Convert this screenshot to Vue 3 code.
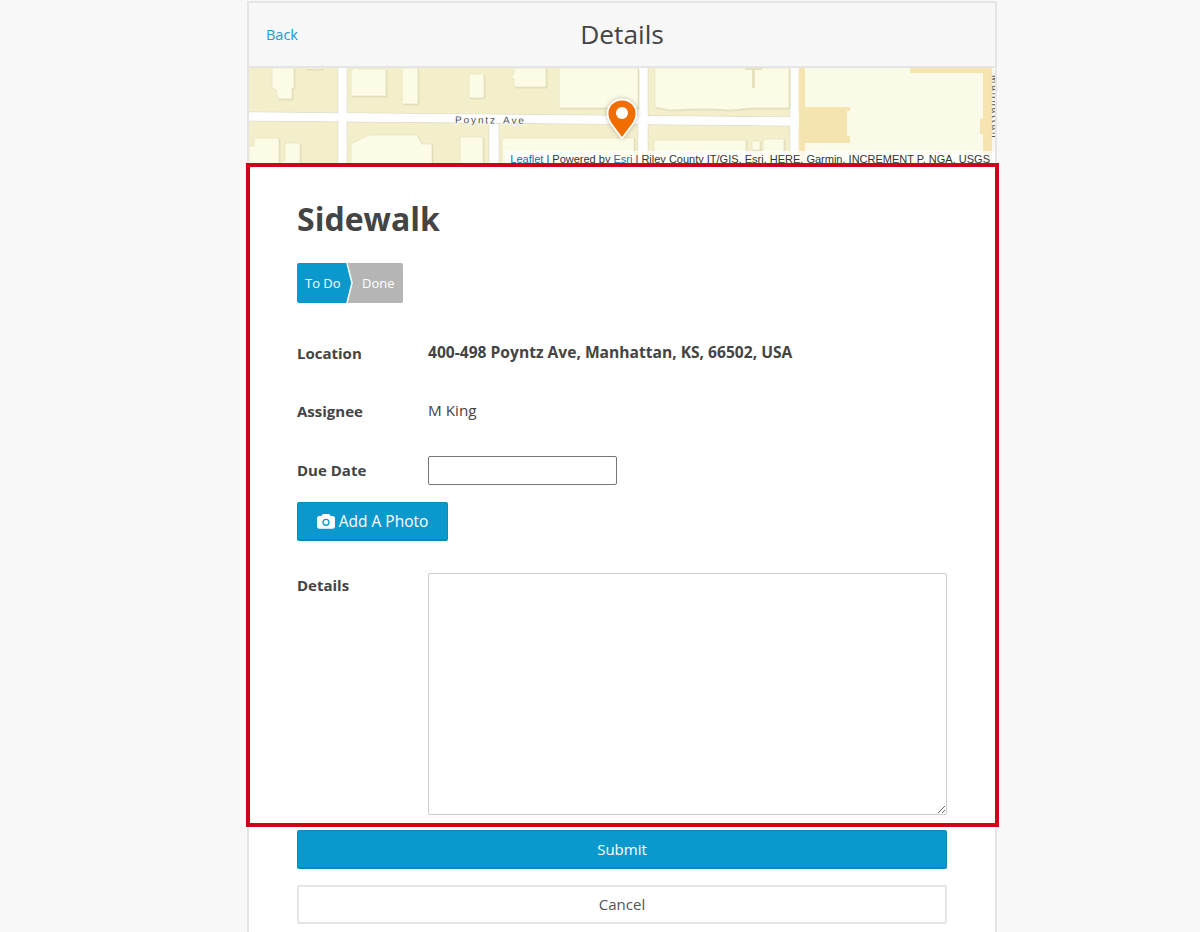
<template>
  <div class="page">
    <main class="shell">
      <header class="topbar">
        <a class="back">Back</a>
        <h1 class="title">Details</h1>
        <span></span>
      </header>
      <section class="map">
        <svg class="map-art" viewBox="249 68 746 97" width="746" height="97" xmlns="http://www.w3.org/2000/svg">
          <rect x="249" y="68" width="746" height="97" fill="#f3efcb" />
          <g fill="#fefefe" stroke="#dcd9c6" stroke-width="0.8">
            <polygon points="249,112 800,117 800,126 249,121" />
            <rect x="338" y="68" width="9" height="97" />
            <rect x="489" y="124" width="10" height="41" />
            <rect x="638" y="68" width="10" height="97" />
            <rect x="790" y="68" width="9" height="97" />
          </g>
          <g fill="#fefefe">
            <polygon points="249,112.500 800,117.500 800,125.500 249,120.500" />
            <rect x="338.500" y="68" width="8" height="97" />
            <rect x="489.500" y="124" width="9" height="41" />
            <rect x="638.500" y="68" width="9" height="97" />
            <rect x="790.500" y="68" width="8" height="97" />
          </g>
          <g class="buildings" fill="#fbfbe6" stroke="#e9e5c4" stroke-width="0.8">
            <polygon points="272,68 294,68 294,88 292,88 292,99 278,99 276,90 272,88" />
            <rect x="306" y="67" width="16" height="2" />
            <polygon points="351,69 354,69 354,68 358,68 358,69 386,69 386,96 351,96" />
            <rect x="402" y="68" width="16" height="36" rx="1" />
            <rect x="469" y="74" width="15" height="24" rx="1" />
            <polygon points="514,68 546,68 546,87 514,87 514,79 511,77 514,74" />
            <rect x="559" y="68" width="79" height="40" />
            <polygon points="249,146 254,146 254,138 279,138 279,165 249,165" />
            <polygon points="285,143 300,143 300,165 281,165 281,161 285,161" />
            <polygon points="351,144 369,135 417,135 422,144 432,144 432,165 351,165" />
            <rect x="460" y="137" width="23" height="28" />
            <rect x="502" y="138" width="132" height="27" />
            <polygon points="655,68 789,68 789,108 752,108 730,110 715,109 690,109 670,110 655,107" />
            <rect x="654" y="140" width="92" height="25" />
            <rect x="752" y="141" width="8" height="9" />
            <rect x="763" y="139" width="21" height="26" />
          </g>
          <rect x="752" y="68" width="3" height="20" fill="#e7e2bd" />
          <rect x="745" y="68" width="17" height="2" fill="#e7e2bd" />
          <rect x="799" y="68" width="196" height="97" fill="#f5e3b0" />
          <polygon points="805,68 910,68 910,73 983,73 983,119 980,119 980,134 983,134 983,165 805,165 805,143 850,143 850,136 847,136 847,111 850,111 850,107 805,107" fill="#fafae8" />
          <rect x="992" y="68" width="3" height="97" fill="#f8f8f0" />
          <text class="road-name halo" x="455" y="123.500" transform="rotate(0.500 490 120)">Poyntz Ave</text>
          <text class="road-name" x="455" y="123.500" transform="rotate(0.500 490 120)">Poyntz Ave</text>
          <text class="road-name side" x="992" y="75" transform="rotate(90 992 75)">Manhattan</text>
        </svg>
        <div class="attribution"><span class="attr-link">Leaflet</span> | Powered by <span class="attr-link">Esri</span> | Riley County IT/GIS, Esri, HERE, Garmin, INCREMENT P, NGA, USGS</div>
        <svg class="pin" viewBox="0 0 32 42" width="32" height="42" xmlns="http://www.w3.org/2000/svg">
          <path d="M16 1.500C7.700 1.500 1.500 7.900 1.500 15.800c0 3.400 1.200 6.300 3 9.200L16 40.500 27.500 25c1.800-2.900 3-5.800 3-9.200C30.500 7.900 24.300 1.500 16 1.500z" fill="#f06e00" stroke="#ffffff" stroke-width="1.800" />
          <circle cx="16" cy="15" r="6" fill="#ffffff" />
        </svg>
      </section>
      <section class="form">
        <h2 class="heading">Sidewalk</h2>
        <div class="steps">
          <span class="step step-on">To Do</span>
          <span class="step step-off">Done</span>
          <svg class="chevron" viewBox="0 0 10 40" width="10" height="40" xmlns="http://www.w3.org/2000/svg">
            <polygon points="0,0 1,0 6,20 1,40 0,40" fill="#0b98cc" />
            <polyline points="1,0 6,20 1,40" fill="none" stroke="#ffffff" stroke-width="1.500" />
          </svg>
        </div>
        <div class="row row-location">
          <span class="label">Location</span>
          <span class="address">400-498 Poyntz Ave, Manhattan, KS, 66502, USA</span>
        </div>
        <div class="row row-assignee">
          <span class="label">Assignee</span>
          <span class="value">M King</span>
        </div>
        <div class="row row-date">
          <span class="label date-label">Due Date</span>
          <input class="date" type="text" />
        </div>
        <button class="btn photo" type="button">
          <svg class="camera" viewBox="0 0 18 16" width="18" height="16" xmlns="http://www.w3.org/2000/svg">
            <path d="M6.300 1h5.400c.5 0 .8.200 1 .6l.8 1.400h2.300C16.900 3 18 4 18 5.200v8.300c0 1.200-1.100 2.200-2.200 2.200H2.200C1.100 15.700 0 14.700 0 13.500V5.200C0 4 1.100 3 2.200 3h2.300l.8-1.400c.2-.4.600-.6 1-.6z" fill="#ffffff" />
            <circle cx="9" cy="9.300" r="3.600" fill="#0b98cc" />
            <circle cx="9" cy="9.300" r="2.200" fill="#ffffff" />
          </svg>
          Add A Photo
        </button>
        <div class="row row-details">
          <span class="label">Details</span>
          <textarea class="notes"></textarea>
        </div>
      </section>
      <div class="actions">
        <button class="btn submit" type="button">Submit</button>
        <button class="cancel" type="button">Cancel</button>
      </div>
    </main>
  </div>
</template>

<script setup>
</script>

<style>
html, body {
  margin: 0;
  background: #f8f8f8;
  overflow: hidden;
}
</style>

<style scoped>
.page {
  height: 932px;
  overflow: hidden;
  background: #f8f8f8;
  padding: 1px 0 0 247px;
  box-sizing: border-box;
  font-family: "Open Sans", sans-serif;
  color: #444444;
}
.shell {
  width: 750px;
  min-height: 960px;
  box-sizing: border-box;
  background: #ffffff;
  border: 2px solid #e5e5e5;
}
.topbar {
  height: 63px;
  background: #f7f7f7;
  border-bottom: 2px solid #e5e5e5;
  display: grid;
  grid-template-columns: 1fr auto 1fr;
  align-items: center;
  padding: 0 17px;
}
.back {
  font-size: 14.500px;
  color: #1a9bd1;
}
.title {
  margin: 0;
  font-size: 26.300px;
  font-weight: 400;
  line-height: 1.2;
  color: #444444;
}
.map {
  position: relative;
  height: 97px;
  overflow: hidden;
}
.map-art {
  display: block;
}
.buildings {
  filter: drop-shadow(1px 1px 0 #e0dcb6);
}
.road-name {
  font-family: "Liberation Sans", sans-serif;
  font-size: 10px;
  letter-spacing: 1.900px;
  word-spacing: 2px;
  fill: #4f4f4f;
}
.halo {
  stroke: #ffffff;
  stroke-width: 2px;
}
.side {
  fill: #55554f;
}
.attribution {
  position: absolute;
  right: 0;
  top: 83px;
  height: 14px;
  padding: 0 5px;
  background: rgba(255, 255, 255, 0.72);
  font-family: "Liberation Sans", sans-serif;
  font-size: 11px;
  line-height: 16px;
  color: #333333;
  white-space: nowrap;
}
.attr-link {
  color: #0078a8;
  text-decoration: underline;
}
.pin {
  position: absolute;
  left: 357px;
  top: 30px;
  filter: drop-shadow(0 0 2px rgba(0, 0, 0, 0.25));
}
.form {
  position: relative;
  margin: -2px -4px 0 -3px;
  height: 664px;
  box-sizing: border-box;
  background: #ffffff;
  border: 4px solid #d0021b;
  padding: 32px 48px 0 47px;
}
.heading {
  margin: 0;
  font-size: 32px;
  font-weight: 700;
  line-height: 40px;
  color: #444444;
}
.steps {
  position: relative;
  display: inline-flex;
  margin-top: 24px;
  height: 40px;
  border-radius: 2px;
  overflow: hidden;
  color: #ffffff;
  font-size: 13px;
}
.step {
  display: flex;
  align-items: center;
  height: 40px;
}
.step-on {
  width: 50px;
  padding-left: 8px;
  box-sizing: border-box;
  background: #0b98cc;
  white-space: nowrap;
}
.step-off {
  width: 56px;
  padding-left: 15px;
  box-sizing: border-box;
  background: #b5b5b5;
}
.chevron {
  position: absolute;
  left: 49px;
  top: 0;
}
.row {
  display: grid;
  grid-template-columns: 131px 1fr;
  align-items: center;
}
.label {
  font-size: 15px;
  font-weight: 700;
  color: #444444;
}
.row-location {
  margin-top: 40px;
  height: 20px;
}
.address {
  font-size: 15.600px;
  font-weight: 700;
  margin-top: -2px;
}
.row-assignee {
  margin-top: 38px;
  height: 20px;
}
.value {
  font-size: 15.300px;
  margin-top: -2px;
}
.row-date {
  margin-top: 35px;
  height: 29px;
}
.date-label {
  margin-top: -2px;
}
.date {
  width: 189px;
  height: 29px;
  box-sizing: border-box;
  border: 1px solid #767676;
  border-radius: 2px;
  background: #ffffff;
  padding: 0 4px;
}
.btn {
  font-family: "Open Sans", sans-serif;
  color: #ffffff;
  background: #0b98cc;
  border: 1px solid #0b8ab9;
  border-bottom-width: 2px;
  border-radius: 2px;
  box-sizing: border-box;
  height: 39px;
  font-size: 15px;
}
.photo {
  display: flex;
  align-items: center;
  justify-content: center;
  gap: 4px;
  width: 151px;
  margin-top: 17px;
  padding: 0;
  font-size: 15.500px;
}
.camera {
  display: block;
}
.row-details {
  margin-top: 32px;
  align-items: start;
}
.row-details .label {
  padding-top: 2px;
}
.notes {
  display: block;
  width: 519px;
  height: 242px;
  box-sizing: border-box;
  border: 1px solid #cccccc;
  border-radius: 2px;
  background: #ffffff;
  margin: 0;
}
.actions {
  padding: 3px 48px 0 48px;
  display: flex;
  flex-direction: column;
  gap: 16px;
}
.submit {
  width: 650px;
}
.cancel {
  width: 650px;
  height: 39px;
  box-sizing: border-box;
  background: #ffffff;
  border: 2px solid #e5e5e5;
  border-radius: 2px;
  font-family: "Open Sans", sans-serif;
  font-size: 15px;
  color: #555555;
  padding: 0 0 2px;
}
</style>
